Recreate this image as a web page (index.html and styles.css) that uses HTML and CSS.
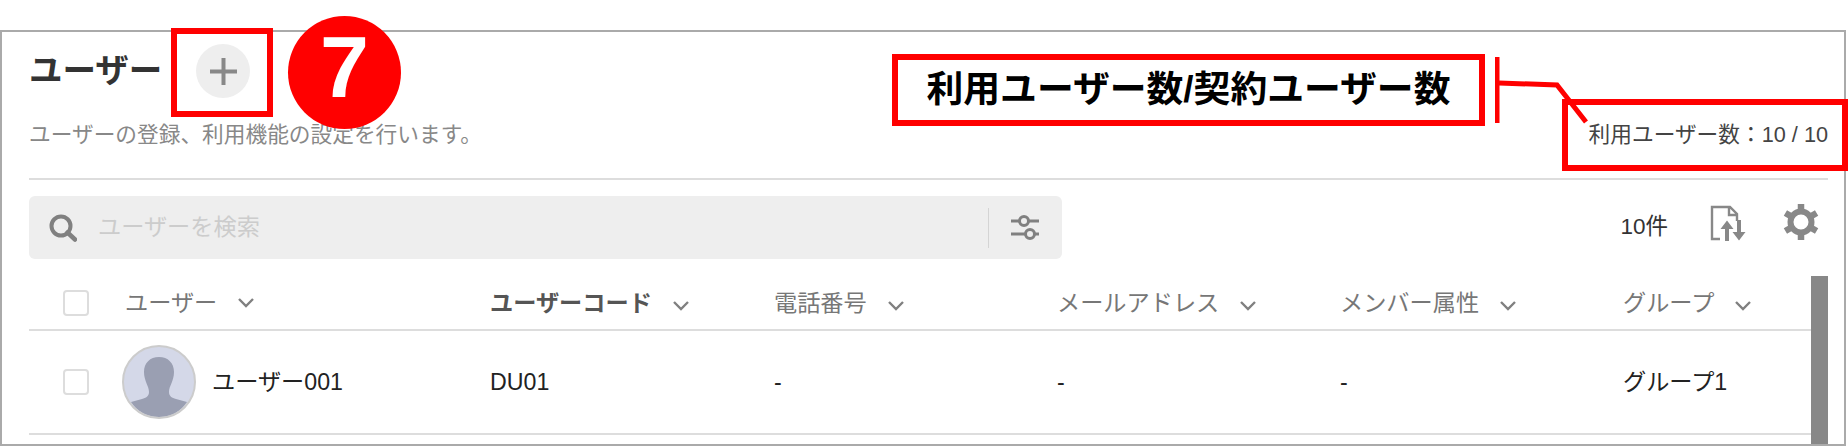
FILE: index.html
```html
<!DOCTYPE html>
<html lang="ja">
<head>
  <meta charset="UTF-8">
  <title>ユーザー</title>
  <link rel="stylesheet" href="styles.css">
</head>
<body>

  <!-- User list panel -->
  <div class="frame">
    <div class="head">
      <div>
        <div class="title-row">
          <h1 class="title">ユーザー</h1>
          <button class="add-btn" aria-label="追加">
            <svg width="27" height="27" viewBox="0 0 27 27"><path d="M11.5 0h4v11.5H27v4H15.500V27h-4V15.500H0v-4h11.500z" fill="#888"/></svg>
          </button>
        </div>
        <div class="subtitle">ユーザーの登録、利用機能の設定を行います。</div>
      </div>
      <div class="user-count">利用ユーザー数：10 / 10</div>
    </div>

    <div class="toolbar">
      <div class="search">
        <svg class="search-icon" width="28" height="28" viewBox="0 0 28 28"><circle cx="12" cy="12" r="9.500" fill="none" stroke="#808080" stroke-width="4"/><path d="M18.500 18.500l7.500 7" stroke="#808080" stroke-width="4.500" stroke-linecap="round"/></svg>
        <span class="search-text">ユーザーを検索</span>
        <div class="search-filter">
          <svg width="30" height="28" viewBox="0 0 30 28"><g fill="none" stroke="#808080" stroke-width="3"><path d="M1 7h8M19 7h10M1 20h14M25 20h4"/><circle cx="14" cy="7" r="4.500"/><circle cx="20" cy="20" r="4.500"/></g></svg>
        </div>
      </div>
      <div class="tools">
        <span class="total">10件</span>
        <svg class="tool-doc" width="36" height="36" viewBox="0 0 36 36"><path d="M10 34H2V2h18l7 7v7M19 2v8h8" fill="none" stroke="#888" stroke-width="2.400"/><path d="M15 36V24h-4.500L17 15.500 23.500 24H19v12zM27 15h4v12h4.500L29 35.500 22.500 27H27z" fill="#888"/></svg>
        <svg class="tool-gear" width="36" height="36" viewBox="0 0 36 36"><circle cx="18" cy="18" r="10.500" fill="none" stroke="#888" stroke-width="6"/><g stroke="#888" stroke-width="6.500"><path d="M18 0v7M18 29v7M2.400 9l6 3.500M27.600 23.500l6 3.500M2.400 27l6-3.500M27.600 12.500l6-3.500"/></g></svg>
      </div>
    </div>

    <div class="table">
      <div class="row row-head">
        <div class="cell cell-check"><span class="checkbox"></span></div>
        <div class="cell cell-user">ユーザー<svg class="chevron" width="16" height="10" viewBox="0 0 16 10"><path d="M1 1l7 7 7-7" fill="none" stroke="#808080" stroke-width="2.400"/></svg></div>
        <div class="cell cell-code sorted">ユーザーコード<svg class="chevron" width="16" height="10" viewBox="0 0 16 10"><path d="M1 1l7 7 7-7" fill="none" stroke="#808080" stroke-width="2.400"/></svg></div>
        <div class="cell cell-col">電話番号<svg class="chevron" width="16" height="10" viewBox="0 0 16 10"><path d="M1 1l7 7 7-7" fill="none" stroke="#808080" stroke-width="2.400"/></svg></div>
        <div class="cell cell-col">メールアドレス<svg class="chevron" width="16" height="10" viewBox="0 0 16 10"><path d="M1 1l7 7 7-7" fill="none" stroke="#808080" stroke-width="2.400"/></svg></div>
        <div class="cell cell-col">メンバー属性<svg class="chevron" width="16" height="10" viewBox="0 0 16 10"><path d="M1 1l7 7 7-7" fill="none" stroke="#808080" stroke-width="2.400"/></svg></div>
        <div class="cell">グループ<svg class="chevron" width="16" height="10" viewBox="0 0 16 10"><path d="M1 1l7 7 7-7" fill="none" stroke="#808080" stroke-width="2.400"/></svg></div>
      </div>
      <div class="row row-body">
        <div class="cell cell-check"><span class="checkbox"></span></div>
        <div class="cell cell-user">
          <svg class="avatar" width="74" height="74" viewBox="0 0 74 74">
            <circle cx="37" cy="37" r="36" fill="#d4d8e8"/>
            <path d="M37 12c-9 0-15 6-15 15 0 9 5 14 5 20 0 4-3 6-7 7l-11 3c6 9 16 15 28 15s22-6 28-15l-11-3c-4-1-7-3-7-7 0-6 5-11 5-20 0-9-6-15-15-15z" fill="#9a9fb2"/>
            <circle cx="37" cy="37" r="36" fill="none" stroke="#ccc" stroke-width="2"/>
          </svg>
          ユーザー001
        </div>
        <div class="cell cell-code">DU01</div>
        <div class="cell cell-col">-</div>
        <div class="cell cell-col">-</div>
        <div class="cell cell-col">-</div>
        <div class="cell">グループ1</div>
      </div>
      <div class="scrollbar"></div>
    </div>
  </div>

  <!-- Callouts drawn over the screenshot -->
  <div class="mark mark-add"></div>
  <div class="step">7</div>
  <div class="mark mark-label">利用ユーザー数/契約ユーザー数</div>
  <div class="mark mark-count"></div>
  <svg class="connector" width="110" height="80" viewBox="0 0 110 80">
    <path d="M2 3v66" stroke="#f00" stroke-width="5" fill="none"/>
    <path d="M4 29l58 2 29 37" stroke="#f00" stroke-width="5" fill="none"/>
  </svg>

</body>
</html>
```

FILE: styles.css
```css
/* Base styling */
body {
  margin: 0;
  width: 1848px;
  height: 446px;
  overflow: hidden;
  position: relative;
  background-color: white;
  font-family: "Liberation Sans", "Noto Sans CJK JP", sans-serif;
}

/* Panel */
.frame {
  box-sizing: border-box;
  width: 1846px;
  height: 416px;
  margin-top: 30px;
  padding: 0 16px 0 27px;
  border: 2px solid #aaa;
  overflow: hidden;
}

/* Header */
.head {
  box-sizing: border-box;
  height: 148px;
  padding-bottom: 28px;
  display: flex;
  justify-content: space-between;
  align-items: flex-end;
  border-bottom: 2px solid #ddd;
}

.title-row {
  display: flex;
  align-items: center;
  margin-bottom: 22px;
}

.title {
  margin: 0;
  font-size: 33.500px;
  line-height: 54px;
  font-weight: bold;
  color: #333;
}

.add-btn {
  width: 54px;
  height: 54px;
  margin-left: 34px;
  padding: 0;
  display: flex;
  align-items: center;
  justify-content: center;
  border: none;
  border-radius: 50%;
  background-color: #eee;
}

.subtitle {
  font-size: 21.700px;
  line-height: 30px;
  color: #888;
}

.user-count {
  font-size: 21.700px;
  line-height: 30px;
  color: #444;
}

/* Search and tools */
.toolbar {
  margin-top: 16px;
  display: flex;
  justify-content: space-between;
  align-items: center;
}

.search {
  box-sizing: border-box;
  width: 1033px;
  height: 63px;
  padding-left: 20px;
  display: flex;
  align-items: center;
  background-color: #eee;
  border-radius: 6px;
}

.search-text {
  margin-left: 21px;
  margin-bottom: 2px;
  font-size: 23.200px;
  line-height: 30px;
  color: #ccc;
}

.search-filter {
  margin-left: auto;
  width: 74px;
  height: 40px;
  display: flex;
  align-items: center;
  justify-content: center;
  border-left: 1px solid #d4d4d4;
  padding-right: 2px;
  box-sizing: border-box;
}

.tools {
  display: flex;
  align-items: center;
  padding-right: 9px;
}

.total {
  font-size: 22.500px;
  line-height: 30px;
  color: #333;
  margin-bottom: 2px;
}

.tool-doc {
  margin-left: 42px;
  margin-bottom: 10px;
}

.tool-gear {
  margin-left: 37px;
  margin-bottom: 12px;
}

/* Table */
.table {
  position: relative;
  margin-top: 17px;
}

.row {
  display: flex;
  align-items: center;
  border-bottom: 2px solid #ddd;
  font-size: 23.200px;
  line-height: 30px;
}

.row-head {
  height: 53px;
  color: #777;
}

.row-body {
  height: 102px;
  color: #222;
}

.cell-check {
  width: 96px;
  flex-shrink: 0;
}

.cell-user {
  width: 365px;
  display: flex;
  align-items: center;
  flex-shrink: 0;
}

.cell-code {
  width: 284px;
  flex-shrink: 0;
}

.cell-col {
  width: 283px;
  flex-shrink: 0;
}

.sorted {
  font-weight: bold;
  color: #555;
}

.checkbox {
  display: block;
  box-sizing: border-box;
  width: 26px;
  height: 26px;
  margin-left: 34px;
  border: 2px solid #ddd;
  border-radius: 4px;
  background-color: white;
}

.chevron {
  margin-left: 21px;
}

.avatar {
  margin-left: -3px;
  margin-right: 16px;
}

.scrollbar {
  position: absolute;
  top: 0;
  right: 0;
  width: 17px;
  height: 170px;
  background-color: #888;
}

/* Callouts */
.mark {
  position: absolute;
  box-sizing: border-box;
  border: 6px solid #f00;
}

.mark-add {
  left: 171px;
  top: 28px;
  width: 102px;
  height: 89px;
}

.step {
  position: absolute;
  left: 288px;
  top: 16px;
  width: 113px;
  height: 113px;
  border-radius: 50%;
  background-color: #f00;
  color: white;
  font-size: 88px;
  font-weight: bold;
  line-height: 102px;
  text-align: center;
}

.mark-label {
  left: 892px;
  top: 54px;
  width: 593px;
  height: 72px;
  background-color: white;
  color: black;
  font-size: 36.800px;
  font-weight: bold;
  line-height: 60px;
  text-align: center;
}

.mark-count {
  left: 1562px;
  top: 99px;
  width: 286px;
  height: 72px;
}

.connector {
  position: absolute;
  left: 1495px;
  top: 54px;
}
```
